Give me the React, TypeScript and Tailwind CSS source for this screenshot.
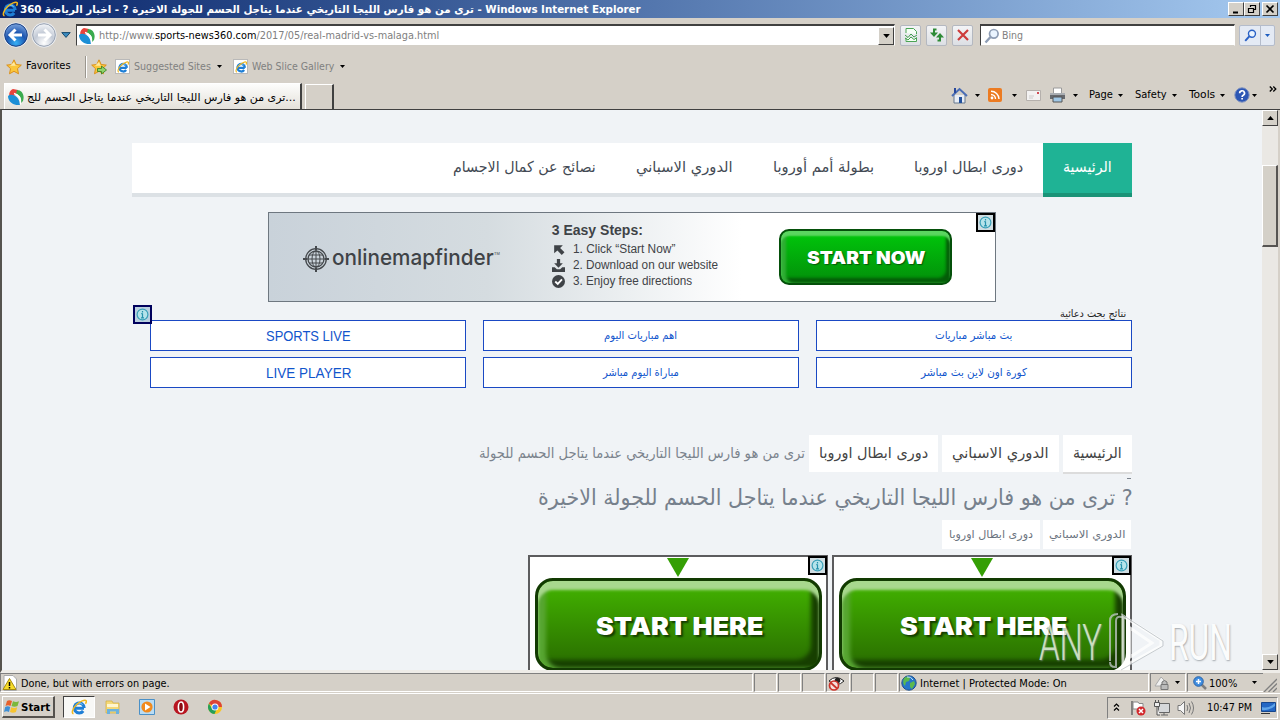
import { useLayoutEffect, useRef, useState } from "react";
import type { ReactNode } from "react";
import clsx from "clsx";

const HEADLINE =
  "ترى من هو فارس الليجا التاريخي عندما يتاجل الحسم للجولة";

const NAV = [
  { label: "دورى ابطال اوروبا", width: "w-[109px]" },
  { label: "بطولة أمم أوروبا", width: "w-[101px]" },
  { label: "الدوري الاسباني", width: "w-[97px]" },
  { label: "نصائح عن كمال الاجسام", width: "w-[143px]" },
];

const SEARCH_LINKS = [
  { label: "بث مباشر مباريات", width: "w-[77px]" },
  { label: "اهم مباريات اليوم", width: "w-[73px]" },
  { label: "SPORTS LIVE", width: "w-[85px]", latin: true },
  { label: "كورة اون لاين بث مباشر", width: "w-[106px]" },
  { label: "مباراة اليوم مباشر", width: "w-[76px]" },
  { label: "LIVE PLAYER", width: "w-[85px]", latin: true },
];

// Single line of text, squeezed or stretched to the width of its box.
function Fit({
  children,
  className,
  rtl = false,
}: {
  children: ReactNode;
  className?: string;
  rtl?: boolean;
}) {
  const box = useRef<HTMLSpanElement>(null);
  const text = useRef<HTMLSpanElement>(null);
  const [scale, setScale] = useState(1);

  useLayoutEffect(() => {
    if (box.current && text.current && text.current.offsetWidth) {
      setScale(box.current.clientWidth / text.current.offsetWidth);
    }
  }, [children]);

  return (
    <span
      ref={box}
      dir={rtl ? "rtl" : "ltr"}
      className={clsx("flex shrink-0 whitespace-nowrap", className)}
    >
      <span
        ref={text}
        className={clsx("block shrink-0", rtl ? "origin-right" : "origin-left")}
        style={{ transform: `scaleX(${scale})` }}
      >
        {children}
      </span>
    </span>
  );
}

function Caret({ className }: { className?: string }) {
  return (
    <svg viewBox="0 0 5 3" className={clsx("h-[3px] w-[5px] shrink-0", className)}>
      <path d="M0 0h5L2.500 3z" fill="#000" />
    </svg>
  );
}

function IeIcon({ className }: { className?: string }) {
  return (
    <svg viewBox="0 0 16 16" className={clsx("size-4 shrink-0", className)}>
      <path
        d="M13 9.300H4.500M13.200 9A5 5 0 1 0 12.200 12"
        fill="none"
        stroke="#1f7fd6"
        strokeWidth="3"
      />
      <path d="M4.500 6.500a4.300 4.300 0 0 1 7-1" fill="none" stroke="#8ad0fa" strokeWidth="1" />
      <path
        d="M2.500 14.800C.2 14.300 1.500 9.500 5.500 5.800 9 2.300 14 .2 15.200 1.800c.4.8-.1 2-.8 3"
        fill="none"
        stroke="#f2b71c"
        strokeWidth="1.500"
      />
    </svg>
  );
}

function IePage() {
  return (
    <span className="flex size-[15px] shrink-0 items-center justify-center border border-[#b9b9b9] bg-white">
      <IeIcon className="size-[12px]!" />
    </span>
  );
}

function SiteIcon() {
  return (
    <svg viewBox="0 0 16 16" className="size-4 shrink-0">
      <path d="M5 0l5 1-2 5-6 2C0 5 2 1 5 0z" fill="#e8443c" />
      <path d="M9 1c5 0 8 5 6 11l-2 2C14 8 11 6 8 5z" fill="#3bab4e" />
      <path d="M0 7q2-2 5-1c4 1 7 5 7 10C6 17 0 13 0 7z" fill="#1c8fd6" />
      <path d="M6 4.500c4 1 7 4 6.500 11" stroke="#fff" strokeWidth="1.400" fill="none" />
    </svg>
  );
}

function Star({ add = false }: { add?: boolean }) {
  return (
    <svg viewBox="0 0 16 16" className="size-4 shrink-0">
      <path
        d="M8 .8l2.200 4.700 5.100.6-3.800 3.500 1 5.200L8 12.300l-4.500 2.500 1-5.200L.7 6.100l5.100-.6z"
        fill="#fbc73c"
        stroke="#d98a12"
        strokeWidth=".9"
      />
      <path d="M8 3l1.300 3.300 3 .4H4z" fill="#ffe9a0" />
      {add && (
        <path
          d="M6.500 9.500h4V7l5 4-5 4v-2.500h-4z"
          fill="#8fd36c"
          stroke="#2e7d1e"
          strokeWidth=".8"
        />
      )}
    </svg>
  );
}

function RoundArrow({ back = false }: { back?: boolean }) {
  return (
    <svg viewBox="0 0 26 26" className="size-[26px] shrink-0">
      <defs>
        <radialGradient id={back ? "rb" : "rf"} cx=".5" cy=".85" r=".8">
          <stop offset="0" stopColor={back ? "#37b0f5" : "#ffffff"} />
          <stop offset=".55" stopColor={back ? "#1c55b0" : "#c3cad6"} />
          <stop offset="1" stopColor={back ? "#6f9ad8" : "#eef1f5"} />
        </radialGradient>
      </defs>
      <circle cx="13" cy="13" r="12.500" fill="#eef1f6" />
      <circle
        cx="13"
        cy="13"
        r="11.300"
        fill={back ? "url(#rb)" : "url(#rf)"}
        stroke={back ? "#163c80" : "#949eae"}
      />
      <path
        d={
          back
            ? "M19 13H8M12.500 7.500L7 13l5.500 5.500"
            : "M7 13h11M13.500 7.500L19 13l-5.500 5.500"
        }
        fill="none"
        stroke="#fff"
        strokeWidth="3"
      />
    </svg>
  );
}

function Magnifier({ color, className }: { color: string; className?: string }) {
  return (
    <svg viewBox="0 0 16 16" className={clsx("size-4 shrink-0", className)}>
      <circle cx="9.800" cy="5.800" r="4.300" fill="#eaf4ff" stroke={color} strokeWidth="1.700" />
      <path d="M6.500 9L1.500 14.500" stroke={color} strokeWidth="2.400" />
    </svg>
  );
}

function InfoBadge({ blue = false }: { blue?: boolean }) {
  return (
    <span
      className={clsx(
        "flex size-[19px] items-center justify-center border-2",
        blue ? "border-[#00005c] bg-[#b9cfdf]" : "border-black bg-[#cfdde2]",
      )}
    >
      <svg viewBox="0 0 13 13" className="size-[13px]">
        <circle cx="6.500" cy="6.500" r="5.400" fill="#b5e3ea" stroke="#3aa0b8" strokeWidth="1.200" />
        <path d="M6.500 5.500V10M6.500 3v1.400M5.300 5.600h1.200M5 9.800h3" stroke="#2691ac" strokeWidth="1.200" />
      </svg>
    </span>
  );
}

function TitleBar() {
  return (
    <div className="flex h-[18px] items-center bg-linear-to-r from-[#0a246a] to-[#a6caf0] pr-[2px] pl-[2px]">
      <IeIcon />
      <Fit className="mt-px ml-[2px] w-[621px] text-[11px] leading-[17px] font-bold text-white">
        {`${HEADLINE} الاخيرة ? - اخبار الرياضة 360 - Windows Internet Explorer`}
      </Fit>
      <div className="ml-auto flex">
        {["min", "restore", "close"].map((kind) => (
          <span
            key={kind}
            className={clsx(
              "flex h-[14px] w-4 items-center justify-center border border-t-white border-r-[#404040] border-b-[#404040] border-l-white bg-[#d4d0c8]",
              kind === "close" && "ml-[2px]",
            )}
          >
            <svg viewBox="0 0 10 10" className="size-[10px]" fill="none" stroke="#000">
              {kind === "min" && <path d="M2 8.500h5" strokeWidth="2" />}
              {kind === "restore" && (
                <path d="M3.500 3V1.500h5v4H7M1.500 4.500h5v4h-5zM3 1.500h6M1 4.500h6" strokeWidth="1.200" />
              )}
              {kind === "close" && <path d="M1.500 1.500l7 7M8.500 1.500l-7 7" strokeWidth="1.700" />}
            </svg>
          </span>
        ))}
      </div>
    </div>
  );
}

function ToolButton({ children }: { children: ReactNode }) {
  return (
    <span className="flex h-[21px] w-[21px] items-center justify-center rounded-[2px] border border-[#b4b8c0] bg-linear-to-b from-[#f3f4f6] to-[#dcdfe4]">
      <svg viewBox="0 0 16 16" className="size-4" fill="none">
        {children}
      </svg>
    </span>
  );
}

function AddressRow() {
  return (
    <div className="flex h-[34px] items-center pl-[3px]">
      <div className="flex gap-[2px] rounded-full">
        <RoundArrow back />
        <RoundArrow />
      </div>
      <svg viewBox="0 0 10 6" className="ml-[4px] h-[6px] w-[10px]">
        <path d="M.8.600h8.400L5 5.400z" fill="#3b8bbf" stroke="#174a6e" />
      </svg>
      <div className="ml-[5px] flex h-[22px] w-[819px] items-center border border-t-2 border-t-[#404040] border-r-white border-b-[#d4d0c8] border-l-[#404040] bg-white pl-[2px]">
        <SiteIcon />
        <Fit className="mt-px ml-[4px] w-[340px] text-[11px] text-[#808080]">
          http://www.<span className="text-black">sports-news360.com</span>
          /2017/05/real-madrid-vs-malaga.html
        </Fit>
        <span className="ml-auto flex h-[18px] w-[16px] items-center justify-center border border-t-white border-r-[#404040] border-b-[#404040] border-l-white bg-[#d4d0c8]">
          <Caret className="h-[4px]! w-[7px]!" />
        </span>
      </div>
      <div className="ml-[5px] flex gap-[5px]">
        <ToolButton>
          <path d="M3 6V1.500h7.500l3 3V7M3 11v3.500h10.500V11" fill="#f5fff5" stroke="#4ba455" />
          <path d="M2 8l3 2.500L8 7l3 3 3-2M2 11l3 2 3-3 3 2.500 3-2" stroke="#3f9d4b" />
        </ToolButton>
        <ToolButton>
          <path d="M7.500 2.500H5V7" stroke="#2e8b37" strokeWidth="2" />
          <path d="M1 5.500h8L5 10z" fill="#2e8b37" />
          <path d="M8.500 13.500H11V9" stroke="#2e8b37" strokeWidth="2" />
          <path d="M7 10.500h8L11 6z" fill="#2e8b37" />
        </ToolButton>
        <ToolButton>
          <path d="M3 3l10 10M13 3L3 13" stroke="#cd3c3c" strokeWidth="2.200" />
        </ToolButton>
      </div>
      <div className="ml-[7px] flex h-[22px] w-[255px] items-center border border-t-2 border-t-[#404040] border-r-white border-b-[#d4d0c8] border-l-[#404040] bg-white pl-[3px]">
        <Magnifier color="#8e9db5" />
        <Fit className="mt-[2px] ml-[2px] w-[21px] text-[11px] text-[#808080]">Bing</Fit>
      </div>
      <div className="ml-[4px] flex h-[21px] w-[36px] items-center rounded-[2px] border border-[#b4bccb] bg-[#e4eaf4]">
        <span className="flex h-full w-[21px] items-center justify-center border-r border-[#b4bccb]">
          <Magnifier color="#2860c5" className="size-[13px]!" />
        </span>
        <svg viewBox="0 0 5 3" className="ml-[4px] h-[3px] w-[5px]">
          <path d="M0 0h5L2.500 3z" fill="#1d5dc0" />
        </svg>
      </div>
    </div>
  );
}

function FavoritesRow() {
  return (
    <div className="flex h-[29px] items-center pl-[6px] text-[11px]">
      <Star />
      <Fit className="ml-[4px] w-[45px]">Favorites</Fit>
      <span className="ml-[14px] h-[22px] w-[2px] border-r border-l border-r-white border-l-[#9a968e]" />
      <span className="ml-[4px] flex">
        <Star add />
      </span>
      <span className="ml-[8px] flex items-center text-[#808080]">
        <IePage />
        <Fit className="mt-px ml-[4px] w-[77px]">Suggested Sites</Fit>
      </span>
      <Caret className="ml-[6px]" />
      <span className="ml-[11px] flex items-center text-[#808080]">
        <IePage />
        <Fit className="mt-px ml-[4px] w-[82px]">Web Slice Gallery</Fit>
      </span>
      <Caret className="ml-[6px]" />
    </div>
  );
}

function TabRow() {
  return (
    <div className="flex h-[28px] items-end text-[11px]">
      <div className="ml-[4px] flex h-[26px] w-[298px] items-center border-t border-r-2 border-l border-t-white border-r-[#404040] border-l-white bg-linear-to-b from-[#fdfdfc] to-[#e4e1da] pl-[3px]">
        <SiteIcon />
        <Fit className="mt-[3px] ml-[3px] w-[269px]">{`${HEADLINE.slice(0, -3)}...`}</Fit>
      </div>
      <div className="ml-[3px] h-[25px] w-[29px] border-t border-r-2 border-l border-t-white border-r-[#404040] border-l-white" />
      <div className="ml-auto flex h-full items-center">
        <svg viewBox="0 0 17 17" className="size-[17px]">
          <path d="M3 8v8h11V8" fill="#e8edf5" stroke="#67788f" />
          <path d="M1 9l7.500-7L16 9" fill="none" stroke="#4a6db5" strokeWidth="2" />
          <path d="M3 1h2v5H3z" fill="#29489b" />
          <path d="M8 10h3v6H8z" fill="#23519c" />
        </svg>
        <Caret className="ml-[7px]" />
        <svg viewBox="0 0 14 14" className="ml-[8px] size-[14px]">
          <rect width="14" height="14" rx="2" fill="#ec7b22" />
          <circle cx="4" cy="10" r="1.400" fill="#fff" />
          <path d="M3 6.500a4.500 4.500 0 0 1 4.500 4.500M3 3.200a8 8 0 0 1 8 7.800" fill="none" stroke="#fff" strokeWidth="1.400" />
        </svg>
        <Caret className="ml-[10px]" />
        <svg viewBox="0 0 15 11" className="ml-[9px] h-[11px] w-[15px]">
          <path d="M.5.500h14v10H.5z" fill="#f3f2f2" stroke="#b5b0ac" />
          <path d="M3 6h5M3 8h4" stroke="#ccc" />
          <path d="M11 2h2v2h-2z" fill="#d14c55" />
        </svg>
        <svg viewBox="0 0 17 16" className="ml-[8px] h-[16px] w-[17px]">
          <path d="M4.500 1h8v6h-8z" fill="#fff" stroke="#9a9a9a" />
          <path d="M1 6h15v6H1z" fill="#66696e" />
          <path d="M1 6h15v2H1z" fill="#a9adb2" />
          <path d="M4 10h9v5H4z" fill="#9fc7e6" stroke="#555" />
        </svg>
        <Caret className="ml-[7px]" />
        <Fit className="mt-px ml-[11px] w-[24px]">Page</Fit>
        <Caret className="ml-[5px]" />
        <Fit className="mt-px ml-[12px] w-[32px]">Safety</Fit>
        <Caret className="ml-[5px]" />
        <Fit className="mt-px ml-[12px] w-[26px]">Tools</Fit>
        <Caret className="ml-[5px]" />
        <svg viewBox="0 0 16 16" className="ml-[9px] size-4">
          <circle cx="8" cy="8" r="7.200" fill="#2c56b4" stroke="#8093c0" />
          <path d="M5.700 6.300a2.400 2.400 0 1 1 3.500 2c-.9.500-1.100.8-1.100 1.600M8.100 11v1.600" fill="none" stroke="#fff" strokeWidth="1.700" />
        </svg>
        <Caret className="ml-[2px]" />
        <svg viewBox="0 0 8 6" className="mr-[3px] mb-[13px] ml-[12px] h-[6px] w-[8px]">
          <path d="M.8.500L3.300 3 .8 5.500M4.300.500L6.800 3 4.300 5.500" fill="none" stroke="#000" strokeWidth="1.300" />
        </svg>
      </div>
    </div>
  );
}

function SiteNav() {
  return (
    <nav
      dir="rtl"
      className="flex h-[54px] w-[1000px] shrink-0 border-b-4 border-[#dce1e5] bg-white text-[15px] text-[#434a54]"
    >
      <a className="-mb-1 flex h-[54px] w-[89px] justify-center border-b-4 border-[#1a9377] bg-[#1fb395] leading-[49px] text-white">
        <Fit rtl className="w-[49px]">الرئيسية</Fit>
      </a>
      {NAV.map((item) => (
        <a key={item.label} className="px-[20px] leading-[49px]">
          <Fit rtl className={item.width}>{item.label}</Fit>
        </a>
      ))}
    </nav>
  );
}

function MapBanner() {
  return (
    <div className="relative mt-[15px] flex h-[90px] w-[728px] shrink-0 items-center border border-[#6e7780] bg-linear-to-r from-[#c9d2da] via-[#d5dce0] via-30% to-white to-65% font-['Liberation_Sans',sans-serif] text-[#3f4347]">
      <svg viewBox="0 0 26 26" className="mt-[4px] ml-[34px] size-[26px]" fill="none" stroke="#45494d">
        <circle cx="13" cy="13" r="10.300" strokeWidth="1.300" />
        <circle cx="13" cy="13" r="8" strokeWidth="1.300" />
        <ellipse cx="13" cy="13" rx="4" ry="8" />
        <path d="M13 3v20M3 13h20M6 9h14M6 17h14" />
        <path d="M13 0v4M13 22v4M0 13h4M22 13h4" strokeWidth="2" />
      </svg>
      <Fit className="ml-[3px] w-[162px] font-['Inter',sans-serif] text-[22px] leading-[26px] font-medium">
        onlinemapfinder
      </Fit>
      <span className="mb-[6px] text-[4px]">TM</span>
      <div className="mb-[4px] ml-[52px] text-[12px] leading-[16px]">
        <Fit className="w-[91px] text-[14px] leading-[18px] font-bold">3 Easy Steps:</Fit>
        <div className="mt-[2px] flex items-center">
          <svg viewBox="0 0 12 12" className="mr-[8px] size-[13px]">
            <path d="M2 2h8L7.500 4.500l4 4-2.500 2.500-4-4L2 9.500z" fill="#3f4347" />
          </svg>
          <Fit className="w-[102px]">1. Click “Start Now”</Fit>
        </div>
        <div className="flex items-center">
          <svg viewBox="0 0 12 12" className="mr-[8px] size-[13px]">
            <path d="M4.500 0h3v4H10L6 8 2 4h2.500zM0 7.500h2.500l2 2h3l2-2H12V12H0z" fill="#3f4347" />
          </svg>
          <Fit className="w-[145px]">2. Download on our website</Fit>
        </div>
        <div className="flex items-center">
          <svg viewBox="0 0 12 12" className="mr-[8px] size-[13px]">
            <circle cx="6" cy="6" r="6" fill="#3f4347" />
            <path d="M3 6l2.300 2.300L9.200 4" fill="none" stroke="#fff" strokeWidth="1.700" />
          </svg>
          <Fit className="w-[119px]">3. Enjoy free directions</Fit>
        </div>
      </div>
      <div className="mr-[43px] ml-auto flex h-[56px] w-[173px] items-center justify-center rounded-[10px] border-2 border-[#04500a] bg-linear-to-b from-[#00c80a] to-[#028f0a] font-['Inter',sans-serif] text-[18px] font-black text-white shadow-[inset_0_5px_2px_#5bd560,inset_5px_0_3px_#30ae35,inset_-4px_-5px_3px_#045c08]">
        <Fit className="w-[118px] [text-shadow:1px_1px_1px_#055a08]">START NOW</Fit>
      </div>
      <div className="absolute top-0 right-0">
        <InfoBadge />
      </div>
    </div>
  );
}

function SearchAds() {
  return (
    <section className="relative mt-[4px] w-[1000px] shrink-0">
      <div className="flex h-[14px] justify-end pr-[6px] text-[10px] leading-[15px] text-[#222]">
        <Fit rtl className="w-[66px]">نتائج بحث دعائية</Fit>
      </div>
      <div dir="rtl" className="grid grid-cols-[316px_316px_316px] gap-x-[17px] gap-y-[6px]">
        {SEARCH_LINKS.map((link) => (
          <a
            key={link.label}
            className={clsx(
              "flex h-[31px] items-center justify-center border border-[#1a49c4] bg-white pt-[2px] text-[#1155cc]",
              link.latin
                ? "font-['Liberation_Sans',sans-serif] text-[14px]"
                : "text-[11px]",
            )}
          >
            <Fit rtl={!link.latin} className={link.width}>{link.label}</Fit>
          </a>
        ))}
      </div>
      <div className="absolute -top-px left-px">
        <InfoBadge blue />
      </div>
    </section>
  );
}

function Breadcrumbs() {
  return (
    <div dir="rtl" className="mt-[47px] flex h-[39px] w-[1000px] shrink-0 gap-[4px] text-[15px] leading-[36px] text-[#444]">
      <a className="h-[39px] border-b-2 border-[#dcdcdc] bg-white px-[10px]">
        <Fit rtl className="w-[49px]">الرئيسية</Fit>
      </a>
      <a className="h-[37px] bg-white px-[10px]">
        <Fit rtl className="w-[97px]">الدوري الاسباني</Fit>
      </a>
      <a className="h-[37px] bg-white px-[10px]">
        <Fit rtl className="w-[109px]">دورى ابطال اوروبا</Fit>
      </a>
      <Fit rtl className="w-[326px] text-[14px] text-[#7b838d]">{HEADLINE}</Fit>
    </div>
  );
}

function StartHereAd() {
  return (
    <div className="relative flex h-[250px] w-[300px] flex-col items-center border-2 border-[#5c5c5e] bg-white">
      <svg viewBox="0 0 22 19" className="mt-px h-[19px] w-[22px] shrink-0">
        <path d="M0 0h22L11 19z" fill="#359f05" />
      </svg>
      <div className="mt-[1px] ml-[1px] flex h-[93px] w-[287px] shrink-0 items-center justify-center rounded-[18px] border-[3px] border-[#123a02] bg-linear-to-b from-[#43b500] to-[#296c00] font-['Inter',sans-serif] text-[25px] font-black text-white shadow-[inset_0_9px_3px_#a8d88e,inset_8px_0_4px_#58a632,inset_-8px_-8px_4px_#173f00]">
        <Fit className="mt-[5px] ml-[2px] w-[167px] [text-shadow:2px_2px_2px_#143c00]">START HERE</Fit>
      </div>
      <div className="absolute -top-px right-[-1px]">
        <InfoBadge />
      </div>
    </div>
  );
}

function Page() {
  return (
    <div className="flex min-w-0 flex-1 flex-col items-center overflow-hidden bg-[#f0f3f6] pt-[33px] font-['DejaVu_Sans',sans-serif]">
      <SiteNav />
      <MapBanner />
      <SearchAds />
      <Breadcrumbs />
      <div className="flex w-[1000px] shrink-0 flex-col items-end">
        <span className="mt-[4px] mr-[1px] h-px w-[4px] bg-[#7b838d]" />
        <h1 className="-mr-px mt-[1px] text-[22px] leading-[36px] text-[#76808c]">
          <Fit rtl className="w-[595px]">{`? ${HEADLINE} الاخيرة`}</Fit>
        </h1>
        <div dir="rtl" className="mt-[4px] mr-px flex gap-[3px] text-[11px] leading-[29px] text-[#6b737e]">
          <a className="h-[29px] bg-white px-[6px]">
            <Fit rtl className="w-[76px]">الدوري الاسباني</Fit>
          </a>
          <a className="h-[29px] bg-white px-[7px]">
            <Fit rtl className="w-[84px]">دورى ابطال اوروبا</Fit>
          </a>
        </div>
        <div className="mt-[6px] flex gap-[4px]">
          <StartHereAd />
          <StartHereAd />
        </div>
      </div>
    </div>
  );
}

function ScrollButton({ down = false }: { down?: boolean }) {
  return (
    <span className="flex h-4 shrink-0 items-center justify-center border border-t-white border-r-[#404040] border-b-[#404040] border-l-white bg-[#d4d0c8]">
      <Caret className={clsx("h-[4px]! w-[7px]!", !down && "rotate-180")} />
    </span>
  );
}

function Scrollbar() {
  return (
    <div className="flex w-4 shrink-0 flex-col bg-[#eae8e4]">
      <ScrollButton />
      <span className="mt-[39px] h-[82px] border border-r-2 border-b-2 border-t-white border-r-[#565452] border-b-[#565452] border-l-white bg-[#d4d0c8]" />
      <span className="flex-1" />
      <ScrollButton down />
    </div>
  );
}

function Watermark() {
  return (
    <div className="absolute top-[608px] left-[1039px] flex items-center font-['Roboto',sans-serif] text-[50px] leading-[60px] font-light text-white opacity-75 [text-shadow:1px_1px_2px_#8a9096]">
      <Fit className="mt-[5px] w-[63px]">ANY</Fit>
      <svg viewBox="0 0 56 60" className="ml-[7px] h-[60px] w-[56px]" fill="none">
        <path d="M7 57V10q0-5 5-4h6M1 50V10q0-7 8-7M6 56q-5 0-5-5" stroke="#c5cacd" strokeWidth="2" />
        <path d="M14 5l38 24v6L14 56V5zM21 17l22 15-22 14z" stroke="#fff" strokeWidth="3" />
        <path d="M12 3l42 27v5L12 59" stroke="#b7bdc1" />
      </svg>
      <Fit className="mt-[5px] ml-[4px] w-[63px] font-normal">RUN</Fit>
    </div>
  );
}

function StatusCell({ className, children }: { className: string; children?: ReactNode }) {
  return (
    <div
      className={clsx(
        "flex h-[19px] shrink-0 items-center border border-t-[#808080] border-r-white border-b-white border-l-[#808080]",
        className,
      )}
    >
      {children}
    </div>
  );
}

function StatusBar() {
  return (
    <div className="flex h-[20px] items-start gap-px text-[11px]">
      <StatusCell className="w-[753px] pl-px">
        <svg viewBox="0 0 16 16" className="size-4">
          <path d="M2 .5h9l3.500 3.500v11.500H2z" fill="#fff" stroke="#aaa" />
          <path d="M7.500 3.500L14 14.500H1z" fill="#f7dc2a" stroke="#a58a0c" />
          <path d="M7.500 7v4M7.500 12v1.500" stroke="#000" strokeWidth="1.500" />
        </svg>
        <Fit className="mt-[3px] ml-[3px] w-[149px]">Done, but with errors on page.</Fit>
      </StatusCell>
      <StatusCell className="w-[23px]" />
      <StatusCell className="w-[23px]" />
      <StatusCell className="w-[23px]" />
      <StatusCell className="w-[24px] pl-px">
        <svg viewBox="0 0 17 16" className="h-[16px] w-[17px]">
          <path d="M1 6q7-7 15 0-7 7-15 0z" fill="#fff" stroke="#222" />
          <circle cx="9.500" cy="5.500" r="2.800" fill="#222" />
          <circle cx="6" cy="10.500" r="4.500" fill="#f5dfdc" stroke="#cc3229" strokeWidth="1.700" />
          <path d="M3 8l6 5.500" stroke="#cc3229" strokeWidth="1.700" />
        </svg>
      </StatusCell>
      <StatusCell className="w-[23px]" />
      <StatusCell className="w-[23px]" />
      <StatusCell className="w-[250px] pl-px">
        <svg viewBox="0 0 16 16" className="size-4">
          <circle cx="8" cy="8" r="7.200" fill="#2676c9" stroke="#1d4f8e" />
          <path d="M3 3q4-3 6 0l-1 3-3 1-1 4q-3-3-1-8zM9 8l4-2 1 3-3 5-2-2z" fill="#5cb94e" />
          <path d="M6 2q4-1 6 3" stroke="#bfe4ff" fill="none" />
        </svg>
        <Fit className="mt-[3px] ml-[3px] w-[147px]">Internet | Protected Mode: On</Fit>
      </StatusCell>
      <StatusCell className="w-[36px] pl-[3px]">
        <svg viewBox="0 0 16 16" className="size-4">
          <path d="M1 11l6-9 3 3-1 6z" fill="#f1f1f1" stroke="#aaa" />
          <path d="M8 9.500V7q2.500-3 5 0v2.500M7 9.500h7v5H7z" fill="#bbb" stroke="#777" />
        </svg>
        <Caret className="ml-[5px]" />
      </StatusCell>
      <StatusCell className="w-[76px] border-r-0 pl-[5px]">
        <svg viewBox="0 0 14 14" className="size-[14px]">
          <path d="M8.500 8.500l4.500 4.500" stroke="#7f7f7f" strokeWidth="2.500" />
          <circle cx="5.500" cy="5.500" r="4.800" fill="#3f8de0" stroke="#2b64a8" />
          <path d="M5.500 3v5M3 5.500h5" stroke="#fff" strokeWidth="1.500" />
        </svg>
        <Fit className="mt-[3px] ml-[2px] w-[28px]">100%</Fit>
        <Caret className="ml-[15px]" />
      </StatusCell>
      <svg viewBox="0 0 14 14" className="mt-[5px] -ml-px size-[14px]">
        <path d="M1 14L14 1M5.500 14L14 5.500M10 14l4-4" stroke="#808080" strokeWidth="1.300" />
      </svg>
    </div>
  );
}

function Taskbar() {
  return (
    <div className="flex h-[27px] items-center border-t border-white pl-[2px] text-[11px]">
      <button className="flex h-[22px] w-[53px] items-center border border-t-white border-r-2 border-b-2 border-r-[#55524e] border-b-[#55524e] border-l-white pl-px font-bold">
        <svg viewBox="0 0 17 16" className="h-4 w-[17px]">
          <path d="M3 2q2-1.500 5 0L6.500 7Q4 5.500 1.500 7z" fill="#e7602b" />
          <path d="M9 2.300q3 1.500 6 0L13.500 7q-3 1.500-6 0z" fill="#7cb83d" />
          <path d="M1.200 8q2.500-1.500 5 0L5 13q-2.500-1.500-5 0z" fill="#3e8fd5" />
          <path d="M7.200 8.300q3 1.500 6 0L12 13q-3 1.500-6 0z" fill="#f7c430" />
        </svg>
        <Fit className="mt-[3px] w-[29px]">Start</Fit>
      </button>
      <span className="ml-[8px] flex h-[22px] w-[32px] items-center justify-center border border-t-[#404040] border-r-white border-b-white border-l-[#404040] bg-[#f8f8f6]">
        <IeIcon />
      </span>
      <svg viewBox="0 0 16 16" className="ml-[10px] size-4">
        <path d="M1 2h6l1 2h6v10H1z" fill="#f4d978" stroke="#d1ac3c" strokeWidth=".7" />
        <path d="M2 5h11v3H2z" fill="#fff6cf" />
        <path d="M2 15v-5h12v5h-3v-2.500H5V15z" fill="#6cb2de" />
      </svg>
      <svg viewBox="0 0 16 16" className="ml-[18px] size-4">
        <path d="M.5.500h15v15H.5z" fill="#b9dcf4" stroke="#4a90c7" />
        <circle cx="8" cy="8" r="5.600" fill="#f18a1d" />
        <path d="M6 4.500L11.500 8 6 11.500z" fill="#fff" />
      </svg>
      <svg viewBox="0 0 16 16" className="ml-[18px] size-4">
        <circle cx="8" cy="8" r="7.500" fill="#b81520" />
        <ellipse cx="8" cy="8" rx="2.600" ry="5" fill="#8a0a12" stroke="#fff" strokeWidth="1.600" />
      </svg>
      <svg viewBox="0 0 16 16" className="ml-[18px] size-4">
        <circle cx="8" cy="8" r="7" fill="#f9c623" />
        <path d="M8 8H15A7 7 0 0 0 1.900 4.500z" fill="#dd4437" />
        <path d="M1.900 4.500A7 7 0 0 0 7.500 15L10 9.500 5 9.500z" fill="#25a05a" />
        <circle cx="8" cy="8" r="3.500" fill="#fff" />
        <circle cx="8" cy="8" r="2.600" fill="#4486ee" />
      </svg>
      <div className="mt-[2px] mr-[2px] ml-auto flex h-[22px] w-[171px] items-center border border-t-[#808080] border-r-white border-b-white border-l-[#808080] pl-[5px]">
        <svg viewBox="0 0 7 8" className="mb-[3px] h-[8px] w-[7px]">
          <path d="M1 3.500L3.500 1 6 3.500M1 7.500L3.500 5 6 7.500" fill="none" stroke="#000" strokeWidth="1.200" />
        </svg>
        <svg viewBox="0 0 16 16" className="ml-[10px] size-4">
          <path d="M2 1v14" stroke="#666" strokeWidth="1.500" />
          <path d="M3 2h5l1 1.500h4v7H9L8 9H3z" fill="#fff" stroke="#888" />
          <circle cx="11" cy="11" r="4.500" fill="#d2282c" />
          <path d="M9 9l4 4M13 9l-4 4" stroke="#fff" strokeWidth="1.500" />
        </svg>
        <svg viewBox="0 0 17 16" className="ml-[7px] h-4 w-[17px]">
          <path d="M5.500 3.500h11v9h-11zM8 15h7M11 12.500V15" fill="#d6d8da" stroke="#666" />
          <path d="M1.500 2.500h5v4h-5zM2.500 0v2.500M5.500 0v2.500M4 6.500V15h3" fill="#eee" stroke="#555" />
        </svg>
        <svg viewBox="0 0 17 16" className="ml-[7px] h-4 w-[17px]" fill="none" stroke="#777">
          <path d="M1 5.500h2.500L7.500 1.500v13l-4-4H1z" fill="#f5f5f5" />
          <path d="M10 5q1.500 3 0 6M12 3q3 5 0 10M14.500 1.500q4 6.500 0 13" />
        </svg>
        <Fit className="ml-[13px] w-[45px]">10:47 PM</Fit>
        <svg viewBox="0 0 15 14" className="ml-[9px] h-[14px] w-[15px]">
          <path d="M.5 1.500h14v9H.5z" fill="#2467c4" stroke="#17468c" />
          <path d="M1 6q7 2 13-4v3q-6 5-13 4z" fill="#5fa4e8" />
          <path d="M0 12.500h9" stroke="#333" />
        </svg>
      </div>
    </div>
  );
}

export default function App() {
  return (
    <div className="relative flex h-[720px] w-[1280px] flex-col overflow-hidden bg-[#d5d0c8] font-['DejaVu_Sans_Condensed','DejaVu_Sans',sans-serif] text-black">
      <TitleBar />
      <AddressRow />
      <FavoritesRow />
      <TabRow />
      <div className="flex h-[564px] border-t border-b-[3px] border-l-2 border-t-[#404040] border-b-[#eeece8] border-l-[#55534f] pr-[2px]">
        <Page />
        <Scrollbar />
      </div>
      <StatusBar />
      <Taskbar />
      <Watermark />
    </div>
  );
}
